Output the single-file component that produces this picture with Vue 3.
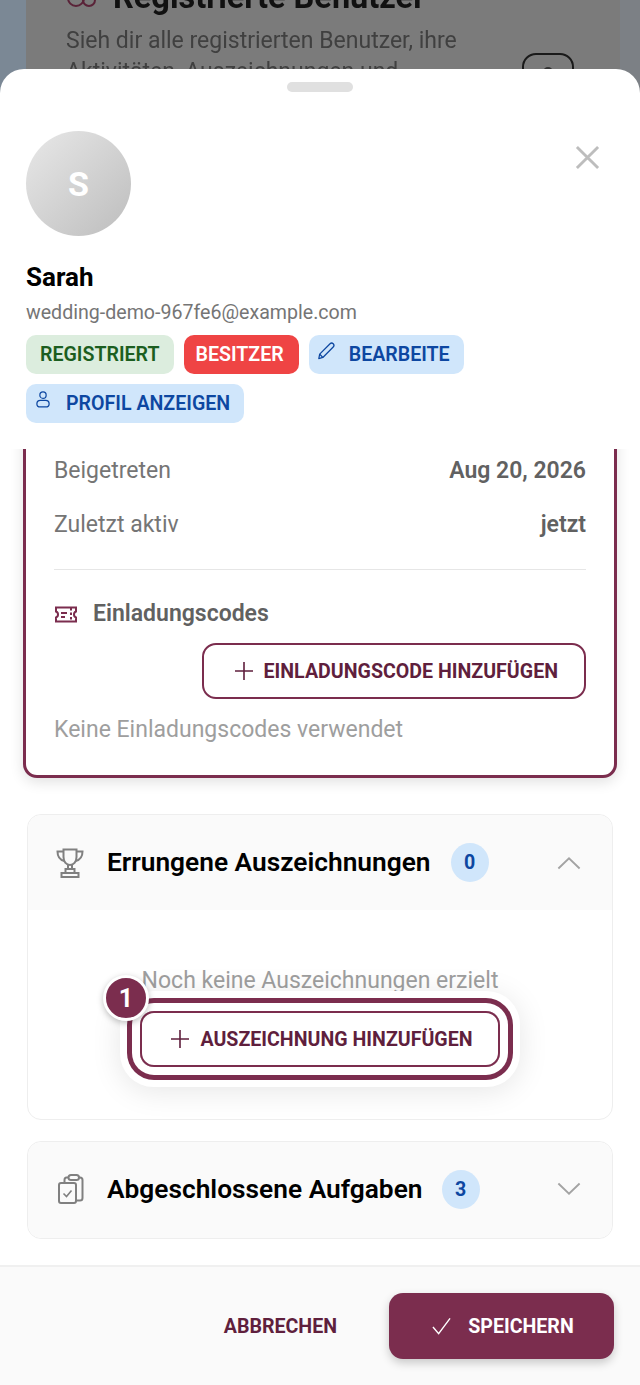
<template>
  <div class="screen">
    <div class="behind">
      <div class="behind-card">
        <div class="behind-title">
          <svg class="behind-icon" width="32" height="22" viewBox="0 0 32 22" fill="none" stroke="#5a2338" stroke-width="2">
            <circle cx="10" cy="12" r="8" />
            <circle cx="23" cy="14" r="6" />
          </svg>
          <span>Registrierte Benutzer</span>
        </div>
        <div class="behind-row">
          <p class="behind-text">Sieh dir alle registrierten Benutzer, ihre Aktivitäten, Auszeichnungen und</p>
          <div class="behind-btn"><div class="behind-dot"></div></div>
        </div>
      </div>
    </div>

    <div class="sheet">
      <div class="handle"></div>

      <header class="head">
        <div class="head-top">
          <div class="avatar">S</div>
          <button class="close" aria-label="Schließen">
            <svg width="25" height="25" viewBox="0 0 26 26" fill="none" stroke="#bdbdbd" stroke-width="3">
              <path d="M2 2L24 24M24 2L2 24" />
            </svg>
          </button>
        </div>
        <h2 class="name">Sarah</h2>
        <div class="email">wedding-demo-967fe6@example.com</div>
        <div class="chips">
          <span class="chip green">REGISTRIERT</span>
          <span class="chip red">BESITZER</span>
          <span class="chip blue">
            <svg class="chip-pen" width="18" height="18" viewBox="0 0 20 20" fill="none" stroke="#0d47a1" stroke-width="1.4" stroke-linejoin="round">
              <path d="M2 18.5L3 13.5L14.5 2C15.5 1 17 1 18 2C19 3 19 4.5 18 5.5L6.5 17.2Z" />
              <path d="M3 13.5L6.5 17.2" />
            </svg>
            BEARBEITE
          </span>
          <span class="chip blue">
            <svg class="chip-person" width="14" height="17" viewBox="0 0 16 19" fill="none" stroke="#0d47a1" stroke-width="1.4">
              <circle cx="8" cy="4.5" r="3.6" />
              <path d="M5 10.5H11C13.5 10.5 15 12.5 15 14.5C15 16.5 13.5 18 11 18H5C2.5 18 1 16.5 1 14.5C1 12.5 2.5 10.5 5 10.5Z" />
            </svg>
            PROFIL ANZEIGEN
          </span>
        </div>
      </header>

      <main class="scroll">
        <section class="info-card">
          <div class="info-row">
            <span class="info-label">Beigetreten</span>
            <span class="info-value">Aug 20, 2026</span>
          </div>
          <div class="info-row">
            <span class="info-label">Zuletzt aktiv</span>
            <span class="info-value">jetzt</span>
          </div>
          <div class="divider"></div>
          <div class="codes-head">
            <svg width="24" height="17" viewBox="0 0 24 17" fill="none" stroke="#7b2d4e" stroke-width="2">
              <path d="M2 1.5H22V5.5C20.5 6 20 7 20 8.5C20 10 20.5 11 22 11.5V15.5H2V11.5C3.5 11 4 10 4 8.5C4 7 3.5 6 2 5.5Z" />
              <path d="M17 2V15" stroke-dasharray="2.5 2" />
              <path d="M7 7H13M7 11H11" />
            </svg>
            <span>Einladungscodes</span>
          </div>
          <div class="codes-action">
            <button class="outline-btn">
              <svg class="plus" width="18" height="18" viewBox="0 0 18 18" stroke="#5f1f3d" stroke-width="1.6">
                <path d="M9 0V18M0 9H18" />
              </svg>
              EINLADUNGSCODE HINZUFÜGEN
            </button>
          </div>
          <p class="empty-left">Keine Einladungscodes verwendet</p>
        </section>

        <section class="panel first">
          <div class="panel-head">
            <svg class="panel-icon" width="28" height="30" viewBox="0 0 28 30" fill="none" stroke="#808080" stroke-width="2">
              <path d="M7.5 1.5H20.5V9C20.5 14 17.5 17 14 17C10.5 17 7.5 14 7.5 9Z" />
              <path d="M7.5 3.5H1.5C1.5 9 4 12 8.5 13M20.5 3.5H26.5C26.5 9 24 12 19.5 13" />
              <path d="M12 17V21M16 17V21" />
              <path d="M9.5 21H18.5V25H9.5Z" />
              <path d="M5.5 25H22.5V29H5.5Z" />
            </svg>
            <span class="panel-title">Errungene Auszeichnungen</span>
            <span class="count">0</span>
            <svg class="chev" width="24" height="14" viewBox="0 0 26 14" fill="none" stroke="#a3a3a3" stroke-width="2">
              <path d="M1.5 13L13 2L24.5 13" />
            </svg>
          </div>
          <div class="panel-body">
            <p class="empty-center">Noch keine Auszeichnungen erzielt</p>
            <div class="spot">
              <span class="step">1</span>
              <button class="outline-btn spot-btn">
                <svg class="plus" width="18" height="18" viewBox="0 0 18 18" stroke="#5f1f3d" stroke-width="1.6">
                  <path d="M9 0V18M0 9H18" />
                </svg>
                AUSZEICHNUNG HINZUFÜGEN
              </button>
            </div>
          </div>
        </section>

        <section class="panel">
          <div class="panel-head closed">
            <svg class="panel-icon clip" width="26" height="30" viewBox="0 0 26 30" fill="none" stroke="#808080" stroke-width="2">
              <rect x="1" y="9" width="17" height="20" rx="2" />
              <rect x="10.5" y="1" width="10.5" height="5" rx="2.5" />
              <path d="M10.5 3.5H8.5C7 3.5 6.5 4.5 6.5 6V9M21 3.5H22C23.5 3.5 24.5 4.5 24.5 6V24C24.5 25.5 23.5 26.5 22 26.5H18" />
              <path d="M5.5 19.5L8.5 22.5L13.5 16.5" stroke-width="1.6" />
            </svg>
            <span class="panel-title">Abgeschlossene Aufgaben</span>
            <span class="count">3</span>
            <svg class="chev" width="24" height="14" viewBox="0 0 26 14" fill="none" stroke="#a3a3a3" stroke-width="2">
              <path d="M1.5 1L13 12L24.5 1" />
            </svg>
          </div>
        </section>
      </main>

      <footer class="foot">
        <button class="cancel">ABBRECHEN</button>
        <button class="save">
          <svg width="19" height="18" viewBox="0 0 20 18" fill="none" stroke="#ffffff" stroke-width="1.5">
            <path d="M1 10L7 17L19 1" />
          </svg>
          SPEICHERN
        </button>
      </footer>
    </div>
  </div>
</template>

<script setup>
</script>

<style>
html,
body {
  margin: 0;
  background: #7a7a7a;
}
</style>

<style scoped>
.screen {
  position: relative;
  width: 640px;
  height: 1385px;
  overflow: hidden;
  font-family: Roboto, "Liberation Sans", sans-serif;
  background: linear-gradient(90deg, #7b8895 50%, #7c8085 50%);
}

button {
  font-family: inherit;
  cursor: pointer;
}

.behind {
  height: 69px;
  padding-left: 26px;
  padding-right: 20px;
  overflow: hidden;
  filter: blur(0.6px);
}

.behind-card {
  height: 160px;
  margin-top: -20px;
  padding: 0 46px 0 40px;
  background: #7b7b7b;
}

.behind-title {
  display: flex;
  align-items: center;
  gap: 15px;
  height: 34px;
  font-size: 32.5px;
  font-weight: 700;
  line-height: 34px;
  color: #111;
}

.behind-row {
  display: flex;
  align-items: flex-start;
  gap: 40px;
  margin-top: 11px;
}

.behind-text {
  width: 416px;
  margin: 0;
  font-size: 23px;
  line-height: 31px;
  color: #404040;
}

.behind-btn {
  width: 52px;
  height: 56px;
  margin-top: 28px;
  box-sizing: border-box;
  border: 2px solid #1a1a1a;
  border-radius: 14px;
}

.behind-dot {
  width: 10px;
  height: 10px;
  margin: 12px auto 0;
  border-radius: 50%;
  background: #333;
}

.sheet {
  position: absolute;
  top: 69px;
  left: 0;
  right: 0;
  bottom: 0;
  display: flex;
  flex-direction: column;
  background: #fff;
  border-radius: 24px 24px 0 0;
}

.handle {
  flex: none;
  width: 66px;
  height: 10px;
  margin: 13px auto 0;
  border-radius: 5px;
  background: #e0e0e0;
}

.head {
  flex: none;
  height: 357px;
  box-sizing: border-box;
  padding: 39px 27px 0 26px;
}

.head-top {
  display: flex;
  justify-content: space-between;
  align-items: flex-start;
}

.avatar {
  width: 105px;
  height: 105px;
  border-radius: 50%;
  display: flex;
  align-items: center;
  justify-content: center;
  font-size: 34px;
  font-weight: 700;
  color: #fff;
  background: linear-gradient(135deg, #e8e8e8, #bdbdbd);
}

.close {
  padding: 0;
  margin: 14px 13px 0 0;
  border: none;
  background: none;
  line-height: 0;
}

.name {
  margin: 26px 0 0;
  font-size: 26px;
  line-height: 30px;
  font-weight: 700;
  color: #000;
}

.email {
  margin-top: 9px;
  font-size: 19.6px;
  line-height: 24px;
  color: #757575;
}

.chips {
  display: flex;
  flex-wrap: wrap;
  gap: 10px;
  margin-top: 10px;
}

.chip {
  display: inline-flex;
  align-items: center;
  height: 39px;
  box-sizing: border-box;
  padding: 0 14px;
  border-radius: 10px;
  font-size: 19.6px;
  font-weight: 600;
}

.green {
  color: #1b5e20;
  background: #dcedde;
}

.red {
  padding: 0 15px 0 12px;
  color: #fff;
  background: #ef4444;
}

.blue {
  padding: 0 14px 0 8px;
  color: #0d47a1;
  background: #d0e6fb;
}

.chip-pen {
  margin: -8px 14px 0 0;
}

.chip-person {
  margin: -8px 16px 0 2px;
}

.scroll {
  flex: 1;
  min-height: 0;
  overflow: hidden;
  padding: 0 27px;
}

.info-card {
  margin: -30px -4px 0;
  height: 359px;
  box-sizing: border-box;
  padding: 21px 28px 0;
  border: 3px solid #7b2d4e;
  border-radius: 14px;
  box-shadow: 0 4px 14px rgba(0, 0, 0, 0.12);
  background: #fff;
}

.info-row {
  display: flex;
  justify-content: space-between;
  align-items: center;
  height: 54px;
  font-size: 23px;
}

.info-label {
  color: #757575;
}

.info-value {
  font-weight: 600;
  color: #616161;
}

.divider {
  height: 1px;
  margin-top: 18px;
  background: #e6e6e6;
}

.codes-head {
  display: flex;
  align-items: center;
  gap: 15px;
  margin-top: 30px;
  font-size: 23px;
  line-height: 28px;
  font-weight: 600;
  color: #616161;
}

.codes-action {
  display: flex;
  justify-content: flex-end;
  margin-top: 15px;
}

.outline-btn {
  display: flex;
  align-items: center;
  justify-content: center;
  height: 56px;
  box-sizing: border-box;
  padding: 0 26px 0 31px;
  border: 2px solid #7b2d4e;
  border-radius: 14px;
  background: #fff;
  font-size: 19.6px;
  font-weight: 700;
  color: #5f1f3d;
}

.plus {
  margin-right: 11px;
}

.empty-left {
  margin: 17px 0 0;
  font-size: 23px;
  line-height: 28px;
  color: #9e9e9e;
}

.panel {
  margin-top: 21px;
  border: 1px solid #eeeeee;
  border-radius: 14px;
  background: #fff;
  overflow: hidden;
}

.panel.first {
  margin-top: 36px;
  height: 306px;
  box-sizing: border-box;
  overflow: visible;
}

.panel-head {
  display: flex;
  align-items: center;
  height: 95px;
  padding: 0 31px 0 28px;
  background: #fafafa;
  border-radius: 14px 14px 0 0;
}

.panel-head.closed {
  box-sizing: border-box;
  height: 96px;
  padding-bottom: 2px;
  border-radius: 14px;
}

.panel-icon {
  flex: none;
  margin-right: 23px;
}

.panel-icon.clip {
  margin-left: 2px;
}

.panel-title {
  margin-bottom: 2px;
  font-size: 26.3px;
  font-weight: 600;
  color: #000;
}

.closed .panel-title {
  margin-bottom: 0;
}

.count {
  flex: none;
  width: 38px;
  height: 39px;
  margin-left: 20px;
  border-radius: 50%;
  display: flex;
  align-items: center;
  justify-content: center;
  font-size: 19.6px;
  font-weight: 700;
  color: #0d47a1;
  background: #d0e6fb;
}

.closed .count {
  margin-left: 19px;
}

.chev {
  flex: none;
  margin-left: auto;
}

.panel-body {
  display: flex;
  flex-direction: column;
  align-items: center;
}

.empty-center {
  margin: 57px 0 0;
  font-size: 23px;
  line-height: 28px;
  color: #9e9e9e;
}

.spot {
  position: relative;
  margin-top: 16px;
  border-radius: 14px;
  box-shadow:
    0 0 0 8px #fff,
    0 0 0 13px #7b2d4e,
    0 0 0 20px #fff,
    0 4px 30px 20px rgba(0, 0, 0, 0.1);
}

.spot-btn {
  width: 360px;
  padding: 0 0 0 4px;
}

.step {
  position: absolute;
  top: -36px;
  left: -37px;
  width: 46px;
  height: 46px;
  box-sizing: border-box;
  display: flex;
  align-items: center;
  justify-content: center;
  border: 3px solid #fff;
  border-radius: 50%;
  background: #7b2d4e;
  color: #fff;
  font-size: 25px;
  font-weight: 700;
  box-shadow: 0 2px 6px rgba(0, 0, 0, 0.25);
}

.foot {
  flex: none;
  height: 120px;
  box-sizing: border-box;
  display: flex;
  justify-content: flex-end;
  align-items: flex-start;
  padding: 26px 26px 0 0;
  border-top: 2px solid #f0f0f0;
  background: #fafafa;
}

.cancel {
  height: 66px;
  margin-right: 52px;
  padding: 0;
  border: none;
  background: none;
  font-size: 19.6px;
  font-weight: 700;
  color: #5f1f3d;
}

.save {
  display: flex;
  align-items: center;
  justify-content: center;
  gap: 17px;
  width: 225px;
  height: 66px;
  padding: 0 0 0 3px;
  border: none;
  border-radius: 14px;
  background: #7b2d4e;
  color: #fff;
  font-size: 19.6px;
  font-weight: 700;
  box-shadow: 0 4px 10px rgba(0, 0, 0, 0.2);
}
</style>
